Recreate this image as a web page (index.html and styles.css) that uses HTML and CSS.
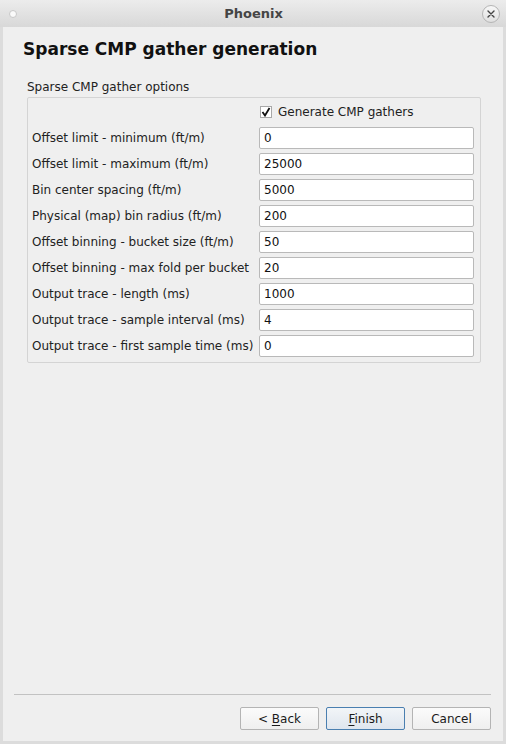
FILE: index.html
```html
<!DOCTYPE html>
<html>
<head>
<meta charset="utf-8">
<link rel="stylesheet" href="styles.css">
</head>
<body>
<div class="window">
  <div class="titlebar">
    <span class="dot"></span>
    <span class="title">Phoenix</span>
    <span class="close">
      <svg width="10" height="10" viewBox="0 0 10 10"><path d="M2 2 L8 8 M8 2 L2 8" stroke="#444" stroke-width="1.4" stroke-linecap="round"/></svg>
    </span>
  </div>
  <div class="content">
    <h1 class="heading">Sparse CMP gather generation</h1>
    <div class="group-title">Sparse CMP gather options</div>
    <div class="group">
      <div class="row">
        <span class="label"></span>
        <label class="check"><span class="box"><svg width="10" height="10" viewBox="0 0 10 10"><path d="M1.5 5 L4 8.5 L8.5 1" fill="none" stroke="#111" stroke-width="1.8"/></svg></span>Generate CMP gathers</label>
      </div>
      <div class="row"><span class="label">Offset limit - minimum (ft/m)</span><span class="input">0</span></div>
      <div class="row"><span class="label">Offset limit - maximum (ft/m)</span><span class="input">25000</span></div>
      <div class="row"><span class="label">Bin center spacing (ft/m)</span><span class="input">5000</span></div>
      <div class="row"><span class="label">Physical (map) bin radius (ft/m)</span><span class="input">200</span></div>
      <div class="row"><span class="label">Offset binning - bucket size (ft/m)</span><span class="input">50</span></div>
      <div class="row"><span class="label">Offset binning - max fold per bucket</span><span class="input">20</span></div>
      <div class="row"><span class="label">Output trace - length (ms)</span><span class="input">1000</span></div>
      <div class="row"><span class="label">Output trace - sample interval (ms)</span><span class="input">4</span></div>
      <div class="row"><span class="label">Output trace - first sample time (ms)</span><span class="input">0</span></div>
    </div>
    <div class="spacer"></div>
    <div class="separator"></div>
    <div class="buttons">
      <span class="btn"><span>&lt; <u>B</u>ack</span></span>
      <span class="btn default"><span><u>F</u>inish</span></span>
      <span class="btn"><span>Cancel</span></span>
    </div>
  </div>
</div>
</body>
</html>
```
FILE: styles.css
```css
html, body {
  margin: 0;
  padding: 0;
}
body {
  width: 506px;
  height: 744px;
  background: #dcdcdc;
  font-family: "DejaVu Sans", sans-serif;
  font-size: 12px;
  color: #1a1a1a;
  overflow: hidden;
}
.window {
  display: flex;
  flex-direction: column;
  height: 744px;
}
.titlebar {
  height: 27px;
  display: flex;
  align-items: center;
  justify-content: space-between;
  padding: 0 6px 0 9px;
  background: linear-gradient(#ececec, #d8d8d8);
  box-sizing: border-box;
}
.dot {
  width: 6px;
  height: 6px;
  border-radius: 50%;
  background: #fafafa;
  border: 1px solid #c8c8c8;
}
.title {
  font-weight: bold;
  font-size: 13px;
  color: #454545;
  margin-left: 8px;
}
.close {
  width: 16px;
  height: 16px;
  border-radius: 50%;
  border: 1px solid #b5b5b5;
  background: linear-gradient(#f7f7f7, #e0e0e0);
  display: flex;
  align-items: center;
  justify-content: center;
}
.content {
  flex: 1;
  margin: 0 3px 3px 3px;
  background: #efefef;
  display: flex;
  flex-direction: column;
  padding: 0 12px 0 11px;
}
.heading {
  margin: 11px 0 0 9px;
  font-size: 17px;
  font-weight: bold;
  color: #111;
  line-height: 22px;
}
.group-title {
  margin: 19px 0 0 13px;
  line-height: 16px;
  color: #222;
}
.group {
  margin: 2px 10px 0 13px;
  border: 1px solid #d4d4d4;
  border-radius: 2px;
  padding: 3px 6px 5px 4px;
  display: flex;
  flex-direction: column;
  gap: 4px;
}
.row {
  display: flex;
  align-items: center;
  height: 22px;
}
.label {
  width: 227px;
  flex: none;
  color: #222;
  white-space: nowrap;
}
.input {
  flex: 1;
  height: 22px;
  box-sizing: border-box;
  background: #fff;
  border: 1px solid #b9b9b9;
  border-radius: 2px;
  padding: 0 4px;
  line-height: 20px;
  color: #111;
}
.check {
  display: flex;
  align-items: center;
  gap: 6px;
  padding-left: 1px;
  color: #222;
}
.box {
  width: 12px;
  height: 12px;
  box-sizing: border-box;
  border: 1px solid #a8a8a8;
  background: #fff;
  display: flex;
  align-items: center;
  justify-content: center;
}
.spacer {
  flex: 1;
}
.separator {
  height: 1px;
  background: #c2c2c2;
  margin: 0 0 12px 0;
}
.buttons {
  display: flex;
  justify-content: flex-end;
  gap: 7px;
  margin-bottom: 11px;
}
.btn {
  width: 79px;
  height: 23px;
  box-sizing: border-box;
  border: 1px solid #b4b4b4;
  border-radius: 2px;
  background: linear-gradient(#fbfbfb, #efefef);
  display: flex;
  align-items: center;
  justify-content: center;
  color: #1a1a1a;
}
.btn.default {
  border-color: #4a7fb0;
  background: linear-gradient(#f2f5f8, #dfe6ee);
}
.btn u {
  text-decoration-thickness: 1px;
  text-underline-offset: 2px;
}
```
